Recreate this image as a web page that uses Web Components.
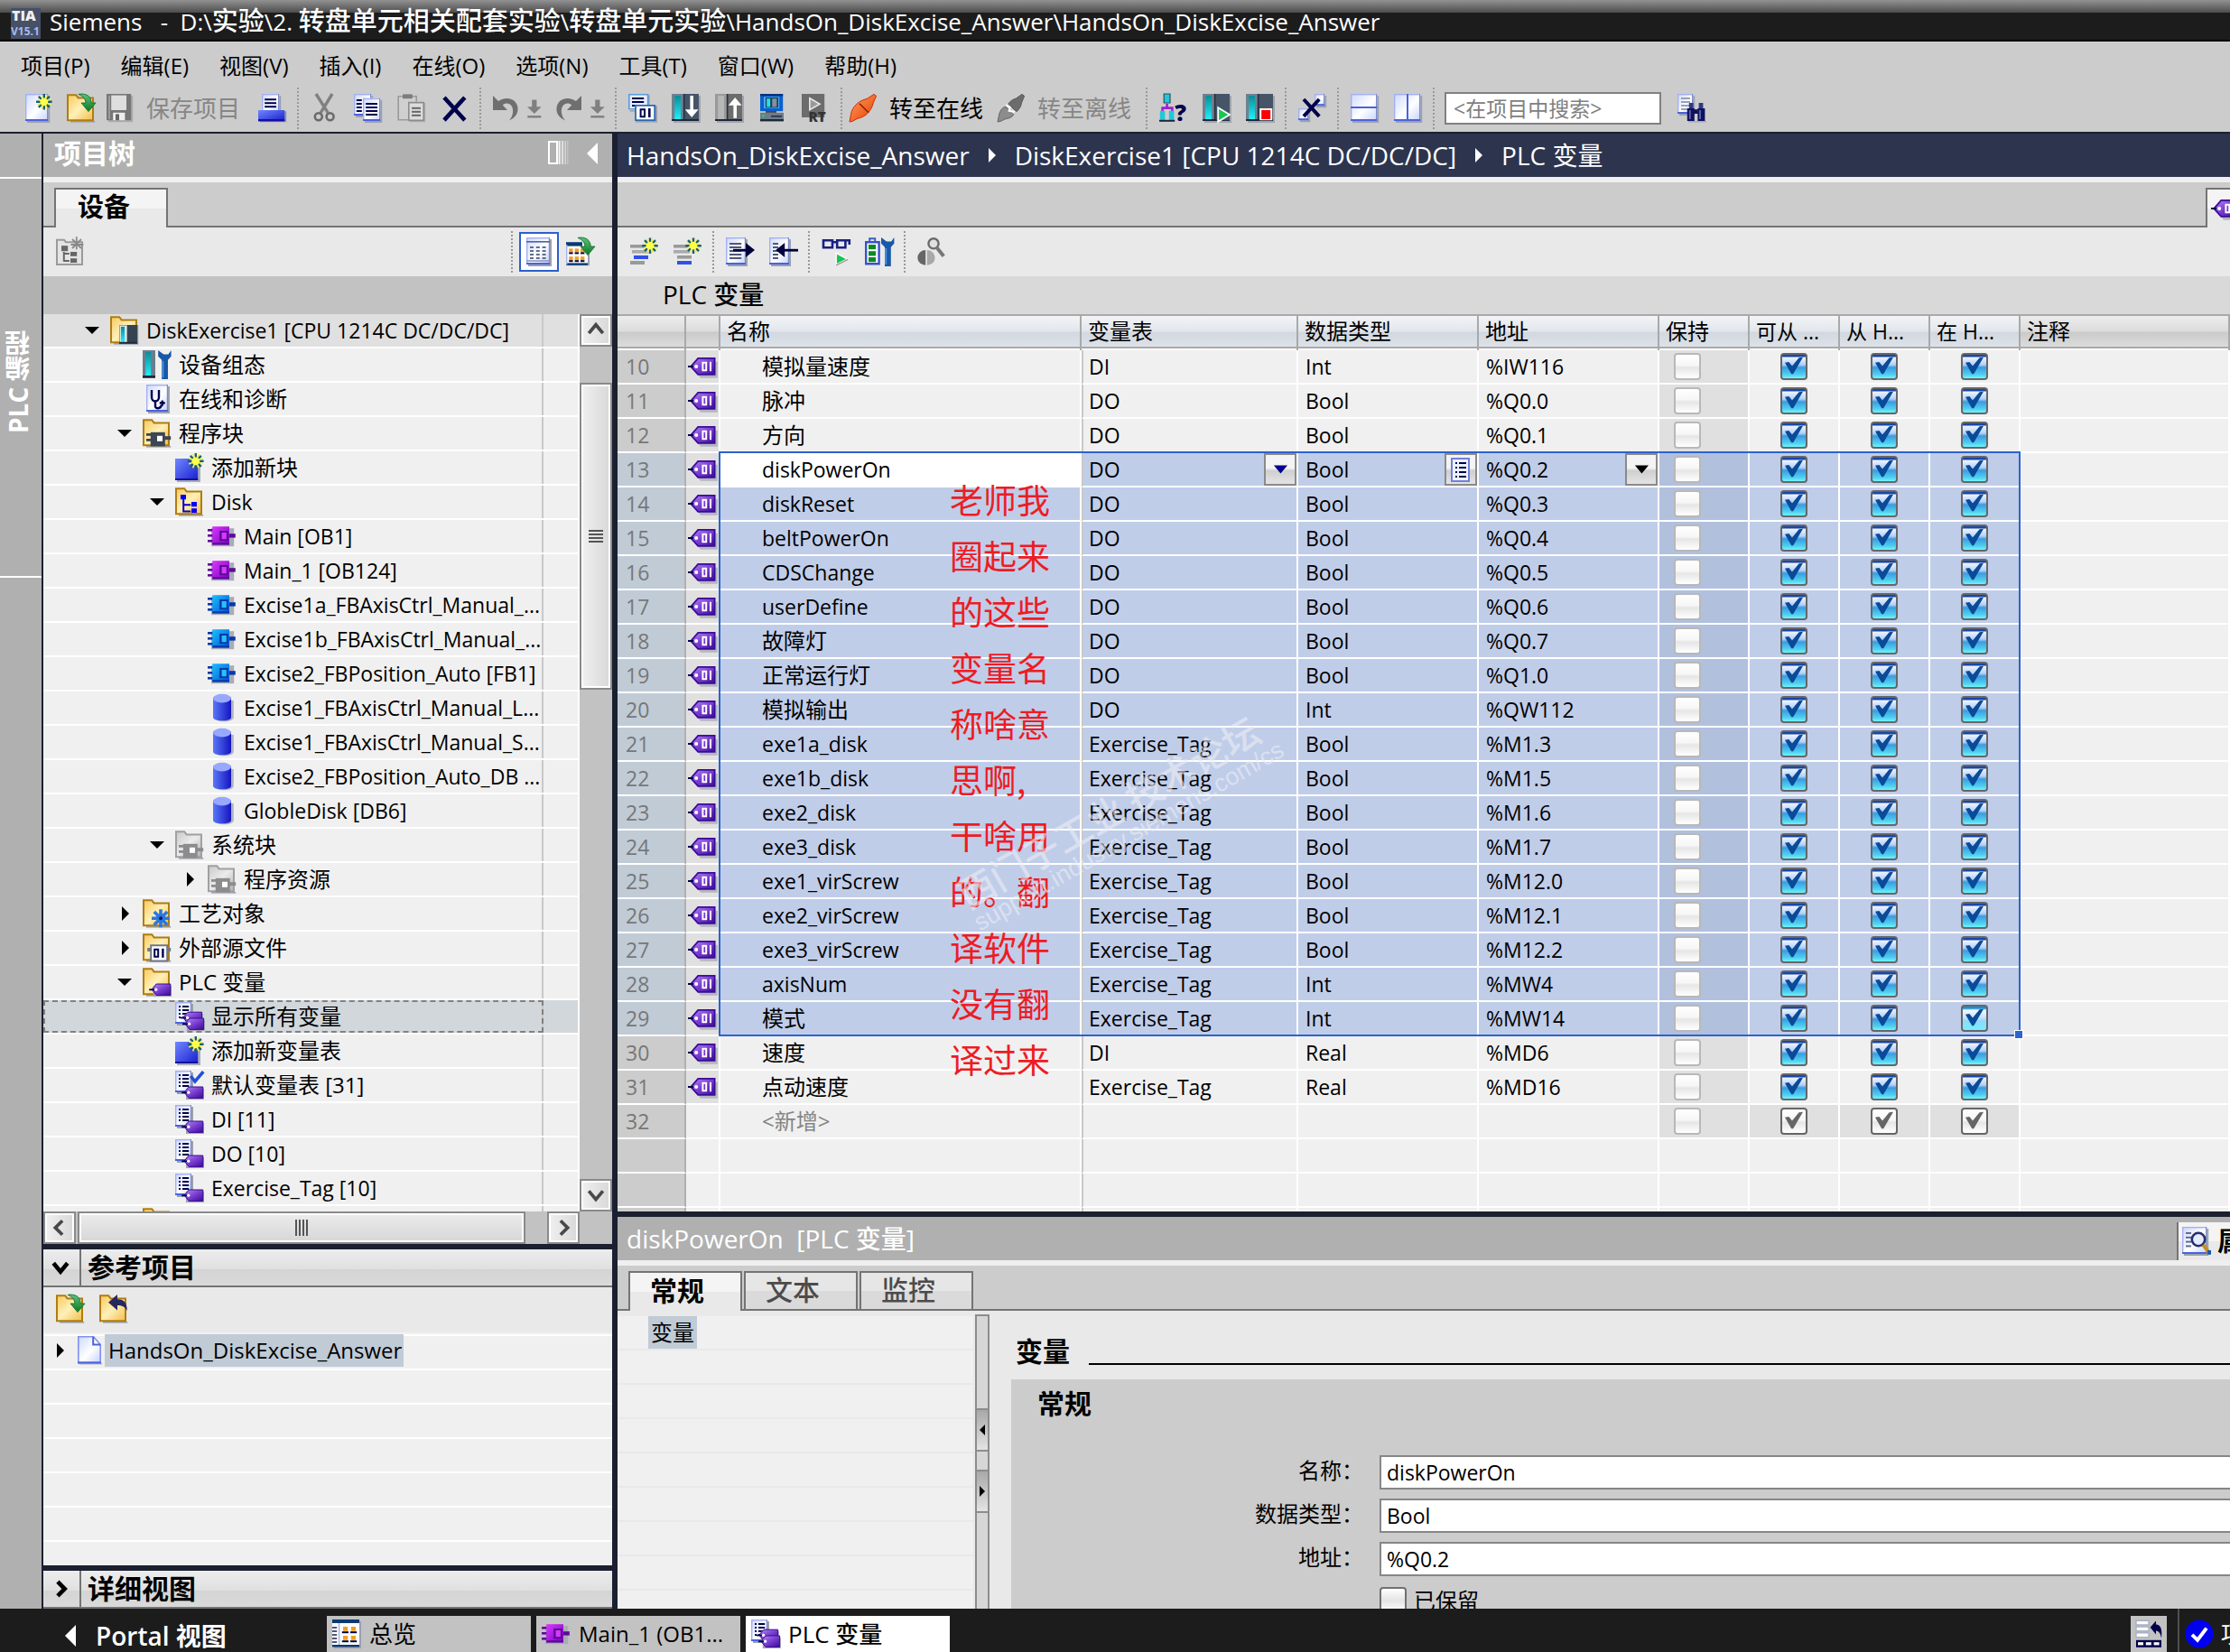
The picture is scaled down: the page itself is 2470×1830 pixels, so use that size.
<!DOCTYPE html>
<html lang="zh-CN">
<head>
<meta charset="utf-8">
<title>Siemens - HandsOn_DiskExcise_Answer</title>
<style>
  html, body { margin: 0; height: 100%; overflow: hidden; }
  body { font-family: "Open Sans", "Noto Sans CJK SC", sans-serif; font-size: 23px; line-height: 34px; color: #000; background: #ccc; }
</style>
</head>
<body>
<tia-app></tia-app>

<script>
/* ---------- shared helpers ---------- */
const BASE = `
  *, *::before, *::after { box-sizing: border-box; }
  button { font: inherit; color: inherit; border: 0; margin: 0; padding: 0; background: none; display: flex; align-items: center; }
  input, select { font: inherit; color: inherit; margin: 0; }
  .zh { font-size: 24px; }
  h1, h2, h3 { margin: 0; font-weight: inherit; font-size: inherit; }
  a { color: inherit; text-decoration: none; }
`;
const isZh = s => /[\u4e00-\u9fff]/.test(s);
const zc = s => isZh(s) ? 'zh' : '';

function define(name, css, html) {
  customElements.define(name, class extends HTMLElement {
    constructor() {
      super();
      const t = document.createElement('template');
      t.innerHTML = `<style>${BASE}${css}</style>` + (typeof html === 'function' ? html(this) : html);
      this.attachShadow({ mode: 'open' }).appendChild(t.content.cloneNode(true));
    }
  });
}

/* ---------- icons, drawn on a 16 unit grid ---------- */
const DEFS = `<defs>
  <linearGradient id="gold" x1="0" y1="0" x2="1" y2="1"><stop offset="0" stop-color="#f7c95c"/><stop offset=".5" stop-color="#fff0b8"/><stop offset="1" stop-color="#f3bd4a"/></linearGradient>
  <linearGradient id="grey" x1="0" y1="0" x2="1" y2="1"><stop offset="0" stop-color="#c8c8c8"/><stop offset=".5" stop-color="#ececec"/><stop offset="1" stop-color="#b0b0b0"/></linearGradient>
  <linearGradient id="doc" x1="0" y1="0" x2="1" y2="1"><stop offset="0" stop-color="#ccd8ff"/><stop offset=".55" stop-color="#fff"/><stop offset="1" stop-color="#c4d2fb"/></linearGradient>
  <linearGradient id="blue" x1="0" y1="0" x2="1" y2="1"><stop offset="0" stop-color="#7088ff"/><stop offset="1" stop-color="#1a1ecf"/></linearGradient>
  <linearGradient id="cyl" x1="0" y1="0" x2="1" y2="0"><stop offset="0" stop-color="#5a78f8"/><stop offset="1" stop-color="#1414c0"/></linearGradient>
  <linearGradient id="pur" x1="0" y1="0" x2="1" y2="1"><stop offset="0" stop-color="#b58cf0"/><stop offset=".5" stop-color="#7a3fd0"/><stop offset="1" stop-color="#3a0a98"/></linearGradient>
  <linearGradient id="mag" x1="0" y1="0" x2="1" y2="1"><stop offset="0" stop-color="#d838ff"/><stop offset="1" stop-color="#7a00b8"/></linearGradient>
  <linearGradient id="sky" x1="0" y1="0" x2="1" y2="1"><stop offset="0" stop-color="#1cc0ff"/><stop offset="1" stop-color="#0050d0"/></linearGradient>
  <linearGradient id="grn" x1="0" y1="0" x2="0" y2="1"><stop offset="0" stop-color="#5cc080"/><stop offset="1" stop-color="#0a7a20"/></linearGradient>
  <linearGradient id="org" x1="0" y1="0" x2="1" y2="1"><stop offset="0" stop-color="#ffa060"/><stop offset="1" stop-color="#e83c00"/></linearGradient>
  <linearGradient id="cyn" x1="0" y1="0" x2="0" y2="1"><stop offset="0" stop-color="#0a8c98"/><stop offset="1" stop-color="#20f0f8"/></linearGradient>
</defs>`;
const R = (x, y, w, h, f, e = '') => `<rect x="${x}" y="${y}" width="${w}" height="${h}" fill="${f}" ${e}/>`;
const P = (d, f = 'none', s = '', w = 1, e = '') => `<path d="${d}" fill="${f}"${s ? ` stroke="${s}" stroke-width="${w}"` : ''} ${e}/>`;
const doc = (x, y, w, h) => R(x + 1, y + 1, w, h, '#9aa0b0') + R(x, y, w, h, 'url(#doc)') + R(x, y, w, .7, '#a4b0f2') + R(x, y, .7, h, '#a4b0f2') + R(x + w - .6, y, .6, h, '#7c8cc8') + R(x, y + h - 1, w, 1, '#4c62dc');
const gdoc = (x, y, w, h) => R(x + .6, y + .6, w, h, '#aaa') + R(x, y, w, h, '#dcdcdc') + P(`M${x + .4} ${y + .4}h${w - .8}v${h - .8}h${.8 - w}z`, 'none', '#8c8c8c', .8);
const lines = (x, y, w, n, c = '#00004c', step = 2) => Array.from({ length: n }, (_, i) => R(x, y + i * step, w, 1, c)).join('');
const star = (x, y) => P(`M${x} ${y - 4.4}v8.8M${x - 4.4} ${y}h8.8M${x - 3} ${y - 3}l6 6M${x + 3} ${y - 3}l-6 6`, 'none', '#1a6070', 1.2) + P(`M${x - 1.6} ${y - 3.8}l3.2 7.6M${x + 1.6} ${y - 3.8}l-3.2 7.6M${x - 3.8} ${y - 1.6}l7.6 3.2M${x - 3.8} ${y + 1.6}l7.6 -3.2`, 'none', '#f4f050', .8) + `<circle cx="${x}" cy="${y}" r="2.2" fill="#ffff48"/>`;
const folder = (f = 'gold', s = '#b07c10') => R(2, 15, 13.6, .8, '#9aa0b0') + P('M.5 14.6V.6h4.6l1.2 1.6h8.2v12.4z', `url(#${f})`, s, 1);
const gArrow = P('M6.5 .2C11 -.6 13.6 1.6 13.6 5H16L12 9.8 8 5h2.4C10.4 2.8 9 1.2 6.5 .2z', 'url(#grn)', '#0a6a20', .4);
const wrench = x => P(`M${x - 3} 0v3.4l2 2V16h3.4V5.400l1.8-2V0l-1.6 2.200h-2.600z`, '#1858a8') + R(x - .9, 6, 1, 9, '#4a90d8');
const plc = (x, c = 'url(#cyn)') => R(x, 0, 7, 15, '#6c7c8c') + R(x + 1.600, 1, 3, 13, c) + R(x, 14, 7, 1.4, '#1c2838');
const cpu = (a = '#70808f', b = '#465468', c = 'url(#cyn)') => R(1, 1, 15, 15, '#a0a4ac') + R(0, 0, 15, 15, a) + R(1.600, 1, 3.400, 13, c) + R(7, 0, 8, 15, b) + R(6.400, 0, .8, 15, '#26303c') + R(0, 14, 15, 1, '#1c2838');
const block = (f, d) => R(2, 3.600, 12.6, 10, '#a8acb8') + R(0, 4, 3, 1.300, d) + R(0, 7, 3, 1.300, d) + R(0, 10, 3, 1.300, d) + R(2.600, 2.600, 9.400, 10, `url(#${f})`) + R(12, 6.600, 3.400, 2.200, d) + R(2.600, 11.600, 9.400, 1.200, d) + R(6.600, 5, 4.800, 5.600, d) + R(7.800, 6, 2.600, 3.600, f === 'mag' ? '#d838ff' : '#28c0ff');
const miniTag = (x, y) => R(x + 1, y + 1, 10, 6, '#a0a4ac') + P(`M${x} ${y + 3}l2.600-3h7.800v6.200h-7.800z`, 'url(#pur)', '#3a0a98', .5) + R(x - 1.400, y + 2.700, 3, .9, '#00004c') + `<circle cx="${x + 2.400}" cy="${y + 3.100}" r=".8" fill="#fff"/>`;
const miniBlock = (d, l) => R(2, 8, 3, 1.400, d) + R(2, 11, 3, 1.400, d) + R(4.400, 7.400, 8, 7, d) + R(12, 9.600, 3.600, 2, d) + R(8, 9.400, 3, 3, l) + R(4.400, 14, 8, 1.200, d);
const table = doc(0, 0, 9, 12) + lines(2, 2, 1, 4) + lines(4, 2, 3.600, 4);
const cross = (x, y, s, w = 2.2) => P(`M${x} ${y}L${x + s} ${y + s * 1.1}M${x + s} ${y}L${x} ${y + s * 1.1}`, 'none', '#00004c', w);
const ICONS = {
  new: doc(0, 0, 12.6, 15) + star(10.4, 4.4),
  open: folder() + gArrow,
  save: R(1, 1, 13.6, 14.6, '#aaa') + R(0, 0, 13.6, 14.6, '#777') + R(2.600, .8, 8.400, 8.200, '#dedede') + R(1, 1, 1, 13, '#9a9a9a') + R(3.600, 10.4, 6.600, 4.200, '#eee') + R(5, 11.2, 2, 3.400, '#666'),
  print: doc(2, 0, 9.600, 11) + lines(3.600, 2.600, 6.400, 3) + R(1, 9.600, 14.6, 6, '#8890b8') + R(0, 9, 14.6, 6, 'url(#blue)') + R(0, 14, 14.6, 1.200, '#1010a0'),
  cut: P('M3 0L9.600 10.4M12 0L5.600 10.4', 'none', '#808080', 1.700) + `<circle cx="4.400" cy="12.6" r="2" fill="none" stroke="#6a6a6a" stroke-width="1.300"/><circle cx="10.800" cy="12.6" r="2" fill="none" stroke="#6a6a6a" stroke-width="1.300"/>`,
  copy: doc(0, 0, 9.600, 12) + lines(1.400, 3, 3, 4) + doc(5, 2.400, 9.600, 12.6) + lines(6.600, 5, 6.400, 4),
  paste: R(.6, 1.400, 10, 13, '#cfcfcf') + P('M.6 1.400h10v13H.6z', 'none', '#9a9a9a', .8) + R(3, .2, 5.400, 2.400, '#7c7c7c') + gdoc(6, 4.400, 9, 10.6) + lines(8, 7.400, 5, 3, '#666'),
  del: cross(2, 2, 11.4, 2.300),
  undo: P('M1 1v8h8L6.400 6.200C9 4 12.600 6 12 10.4c-.2 2-1.200 3.400-2.200 4.400 3.600-1.400 5.400-4.200 4.900-7.400C14 2.600 8.400 1 4 4z', '#6f6f6f'),
  redo: P('M15 1v8H7l2.600-2.800C7 4 3.400 6 4 10.4c.2 2 1.200 3.400 2.200 4.400C2.600 13.4.8 10.600 1.300 7.400 2 2.600 7.600 1 12 4z', '#6f6f6f'),
  dl: R(6.400, 2.600, 3, 5, '#808080') + P('M3.400 7h9L7.900 11.400z', '#808080') + R(3.600, 12.600, 8.600, 1.400, '#808080'),
  compile: R(.8, .8, 11, 9, '#9aa0b0') + R(0, 0, 11, 9, '#e4eefc') + P('M.4.4h10.4v8H.4z', 'none', '#5a9ad8', .8) + lines(2, 2, 6.600, 3) + R(4, 6.600, 12, 9.200, '#9aa0b0') + R(3.600, 6, 11.400, 9, '#fff') + P('M4 6.400h10.600v8.200H4z', 'none', '#2a6ab0', .9) + P('M6.800 8.600h2.200v4H6.800z', 'none', '#00004c', 1) + R(11, 8, 1.300, 5, '#00004c'),
  download: cpu() + R(10.2, 1, 1.800, 8, '#fff') + P('M7.400 8.600h7.400L11.100 13z', '#fff'),
  upload: cpu('#9a9a9a', '#6c6c6c', '#b8b8b8') + R(10.2, 6, 1.800, 7.400, '#fff') + P('M7.400 6.400h7.400L11.100 2z', '#fff'),
  pc: R(1, 0, 12.6, 9.600, '#0a60d0') + R(1, 0, 12.6, 1.200, '#0a3080') + R(3, 1.600, 8.600, 6.400, '#4aa8f0') + R(4, 2, 7, 5.600, '#1c3c50') + R(4.600, 2.600, 2, 4.600, '#20e0f0') + R(7.600, 2.600, 2.600, 4.600, '#8090a0') + R(4, 9.600, 6, .8, '#26303c') + R(1, 10.4, 13, 4.200, '#6c7c8c') + R(1, 14, 13, 1.200, '#1c2838') + R(2, 11.600, 1.400, 1, '#20e040') + R(7, 12, 6, .8, '#26303c'),
  rt: R(0, 0, 12.600, 13, '#6c6c6c') + P('M4.400 2.400l5.600 3.200-5.600 3.200z', '#999', '#e8e8e8', .8) + `<text x="3.800" y="15.6" font-size="7.600" font-weight="800" font-family="Open Sans" fill="#333">RT</text>`,
  online: P('M.5 15.500l.8-4.400C2 7 6 3.500 10 2.800L14 .2l1.300 1L13.600 5c-.8 4-4 7.800-8.600 8.600L2 15.200z', 'url(#org)', '#c83000', .5) + P('M6 5.400l5 5', 'none', '#8c2000', .8),
  offline: P('M.5 15.500l.8-4C2 8.600 3.600 7.400 5 7l4.400 4.600c-1 1.400-2.600 2-4.400 2.200L2 15.200z', '#8c8c8c', '#666', .5) + P('M6.400 5.600C7.400 4 9 3 10.6 2.600L14 .2l1.300 1-1.500 3.600c-.3 2-1.400 4-2.800 5z', '#6c6c6c', '#555', .5) + P('M5 6.200l2.400 1.200-.6 2 3 .6', 'none', '#fff', 1),
  net: R(2.600, 0, 3.400, 5, '#20c8d8') + P('M2.600 0h3.400v5H2.600z', 'none', '#2a5060', .6) + P('M4.300 5.400v2M1.800 10V7.800h5.400V10', 'none', '#a020d0', 1.300) + R(.4, 9.400, 2.800, 5.600, '#20c8d8') + R(5.400, 9.400, 2.800, 5.600, '#20c8d8') + R(0, 14.400, 8.600, 1, '#1c2838') + `<text x="8.600" y="15" font-size="12.600" font-weight="800" font-family="Open Sans" fill="#00004c">?</text>`,
  start: cpu() + R(7.600, 8, 7.400, 6.600, '#465468') + P('M8.600 7.600l6.400 3.900-6.400 3.900z', '#18c850', '#fff', .9),
  stop: cpu() + R(7.600, 8, 7, 6.600, '#fff') + R(8.600, 9, 5, 5, '#f00'),
  xwin: doc(9, 0, 5.600, 6.600) + doc(0, 8, 5.600, 6.600) + cross(3, 3, 8.600, 2),
  splith: doc(0, 0, 14.6, 15) + R(0, 7, 14.6, 1, '#4c62dc'),
  splitv: doc(0, 0, 14.6, 15) + R(7, 0, 1, 15, '#4c62dc'),
  find: doc(0, 0, 8.600, 11) + lines(2, 2, 5, 4, '#98a0b8') + R(6, 15, 10, .8, '#a8acb8') + R(5.400, 8, 4, 7, '#10105c') + R(11.200, 8, 4, 7, '#10105c') + R(6.400, 5, 2.400, 3, '#303880') + R(11.800, 5, 2.400, 3, '#303880') + R(9, 8.600, 2.400, 2.400, '#10105c') + R(6.400, 9, 1, 5, '#5060a8') + R(12, 9, 1, 5, '#5060a8'),
  treenew: P('M.5 15V1.400h4l1 1.200h9v12.400z', '#e4e4e4', '#9a9a9a', 1) + P('M4.400 8v5.400M4.400 9h3M4.400 13h3', 'none', '#666', 1) + R(3, 4.600, 3.600, 3, '#666') + R(8, 8, 3.600, 2.400, '#666') + R(8, 11.600, 3.600, 2.400, '#666') + P('M11.400 -.4v7M8.200 4h7M9 1l5 5M14 1l-5 5', 'none', '#8a8a8a', .9),
  list: doc(1, 0, 13, 15) + R(1, 2, 13, .8, '#4c62a0') + lines(3, 5, 2, 4, '#606c90') + lines(6.400, 5, 2, 4, '#606c90') + lines(9.800, 5, 2, 4, '#606c90') + R(1, 12.6, 13, .8, '#8c98c0'),
  goto: R(1, 3, 12, 12.6, '#9aa0b0') + R(0, 2.600, 12, 12, '#fff') + R(0, 2.600, 9, 2.200, '#0a3a70') + R(0, 14.2, 12, 1.200, '#0a3a70') + [6.2, 10.600].map(y => [1.600, 4.800, 8].map(x => R(x, y, 2.200, 2, '#f0a020') + R(x, y + 2, 2.200, 1, '#00003c')).join('')).join('') + R(0, 4, .7, 11, '#a4b0f2') + gArrow,
  addrow: R(0, 4, 8, 1.800, '#9a9a9a') + R(1, 7, 9, 1.800, '#a8acb0') + R(2, 10, 8, 2, '#3050e8') + R(0, 13, 8, 2, '#9a9a9a') + star(11, 4.600),
  insrow: R(0, 4, 8, 1.800, '#9a9a9a') + R(0, 7, 9, 1.800, '#a8acb0') + R(2, 10, 8, 1.800, '#9a9a9a') + R(2, 13, 8, 2, '#3050e8') + star(11, 4.600),
  export: doc(0, 0, 11, 15) + lines(2, 3, 6.600, 5, '#505878') + R(4, 6.400, 8, 1.400, '#00003c') + P('M11 3l5 4-5 4z', '#00003c'),
  import: doc(0, 0, 11, 15) + lines(2, 3, 3, 5, '#505878') + R(6, 6.400, 10, 1.400, '#00003c') + P('M8.600 3l-5 4 5 4z', '#00003c'),
  monitor: P('M1 1.600h5v4H1zM8.600 1.600h4.600v4H8.600zM6 2.600h2.600M13 1.600h2.400v2.400', 'none', '#1a2080', 1.300) + P('M8 8.600l6.600 3.400L8 15.200z', '#10c850', '#f4f4f4', 1) + P('M8 15.400l6.600-3.200', 'none', '#999', .7),
  config2: P('M2.600 2V.6h3V2', 'none', '#3a60c0', 1) + P('M.6 2.600h7.200v12H.6z', '#fff', '#3a50d0', 1.200) + R(2, 4, 4, 2.600, '#0a8a20') + R(2, 7.600, 4, 2.600, '#0a8a20') + R(2, 11, 4, 2.600, '#0a8a20') + wrench(12),
  probe: `<circle cx="9" cy="3.400" r="2.800" fill="#e0e0e0" stroke="#6a6a6a" stroke-width="1.200"/>` + P('M10.6 5.400l4 5', 'none', '#777', 2) + P('M4.600 7a4.400 4.200 0 000 8.400z', '#666') + P('M5.400 7a4.400 4.200 0 010 8.400z', '#a8a8a8'),
  tag: P('M3 9.400l4-4h9.400v9H7z', '#b4b6c0') + P('M1.600 8l4-4.600h9.200v9H5.600z', 'url(#pur)', '#3a0a98', .9) + R(0, 7.500, 3, 1, '#00004c') + `<circle cx="4.600" cy="8" r="1" fill="#fff"/>` + P('M8.200 5.900h1.900v4.200H8.200z', 'none', '#fff', 1) + R(12, 5.400, 1, 5.200, '#fff'),
  plcfolder: folder() + R(5, 5, 10.6, 10.6, '#8890a0') + R(5.400, 5.400, 4, 9.600, '#d8e4e8') + R(6, 6, 2, 8.400, 'url(#cyn)') + R(9.400, 5, 5.600, 10, '#36424f') + R(5, 14.400, 10, 1, '#1c2838'),
  devcfg: plc(0) + wrench(11.6),
  diag: doc(2, 0, 12, 15) + P('M5 3v4c0 3 4 3 4 0V3M7 9.400v2.600c0 1.600 3 1.600 3.400-.6', 'none', '#00004c', 1.200) + R(9.400, 9.600, 3, 1.200, '#00004c') + R(10.3, 8.800, 1.200, 3, '#00004c'),
  blkfolder: folder() + miniBlock('#3c4654', '#fff'),
  newblue: R(1, 4, 13, 12, '#a8acb8') + R(0, 3, 12.600, 12, 'url(#blue)') + R(0, 14, 12.600, 1, '#1010a0') + star(11.4, 4.400),
  grpfolder: folder() + P('M4.600 6v7.200h4M4.600 9.600h4', 'none', '#00c', 1) + R(3, 4, 3, 2.600, '#00f') + R(9, 8, 3, 2.600, '#00f') + R(9, 11.600, 3, 2.400, '#00f'),
  ob: block('mag', '#5c0a98'),
  fb: block('sky', '#0838a8'),
  db: P('M4 3v10.400c0 3 10.400 3 10.400 0V4z', '#b0b4c4') + P('M3 2.200v11c0 2.600 10 2.600 10 0v-11z', 'url(#cyl)') + `<ellipse cx="8" cy="2.800" rx="5" ry="2.400" fill="#98a8ff"/>`,
  sysfolder: folder('grey', '#a0a0a0') + miniBlock('#8c8c8c', '#fff'),
  techfolder: folder() + P('M10 5.600v10M5 10.600h10M6.400 7l7.200 7.200M13.600 7l-7.200 7.200', 'none', '#2a78e0', 1.800) + `<circle cx="10" cy="10.600" r="2.600" fill="#2a78e0"/><circle cx="10" cy="10.600" r="1" fill="#001c60"/>`,
  extfolder: folder() + R(2.600, 8, 13, 2, '#707888') + R(4.600, 6.600, 9, 8.800, '#fff') + P('M4.600 6.600h9v8.600h-9z', 'none', '#707888', 1) + P('M6.600 8.900h2v4h-2z', 'none', '#00004c', 1) + R(10.600, 8.400, 1.200, 5, '#00004c'),
  tagfolder: folder() + miniTag(5, 9),
  tags: table + miniTag(4.400, 5.600) + miniTag(5.400, 9),
  tagtable: table + miniTag(5, 9),
  tagdef: table + miniTag(5, 9) + P('M8.600 3l2.400 3L15.600 .6', 'none', '#2050d8', 1.800),
  folder: folder(),
  page: R(1, 15, 12.6, .8, '#b8bccc') + P('M.4.400h8.400L12.600 4.800v10H.4z', 'url(#doc)', '#8090f0', .8) + P('M8.600.4v4.400h4', 'none', '#4c62dc', 1) + R(0, 14.2, 13, 1, '#4c62dc'),
  close: folder() + P('M5 4.400L10 0v2.600c3.600 0 5.400 1.800 5.400 6.400-1.400-2.400-2.800-3-5.400-3v2.800z', '#28285c'),
  overview: R(1, 1, 15, 15, '#9aa0b0') + R(0, 0, 15, 15, '#fff') + R(0, 0, 15, 2, '#0a3a70') + R(0, 14, 15, 1.200, '#0a3a70') + lines(0, 4, 2.600, 5, '#505878') + R(3.400, 2, .8, 12, '#a8b8d8') + R(6, 4, 2.600, 2.400, '#f0a020') + R(10.400, 4, 2.600, 2.400, '#f0a020') + R(5.400, 6.600, 3.600, 1, '#00003c') + R(10, 6.600, 3.600, 1, '#00003c') + R(6, 9, 2.600, 2.400, '#f0a020') + R(10.400, 9, 2.600, 2.400, '#f0a020') + R(5.400, 11.600, 3.600, 1, '#00003c') + R(10, 11.600, 3.600, 1, '#00003c'),
  props: doc(0, 0, 13.600, 15) + lines(2, 3, 3, 4, '#606c90', 2.400) + `<circle cx="9" cy="7" r="3.600" fill="#e4ecff" stroke="#26306c" stroke-width="1.300"/>` + P('M11.600 10l3.600 4.600', 'none', '#c89020', 2) + R(14, 13, 2, 2.400, '#1858a8'),
  dock: P('M1 .6h7v2.400H1zM1 4h7v2.400H1zM1 7.400h7v2.400H1z', '#fff', '#a8b0c4', .7) + P('M8.800 4.400L12 .8v2c2.600.2 3.600 2.400 3 7.600-.4-2.600-1.200-4-3-4.200v2z', '#00004c') + R(1, 11.400, 14, 4, '#00004c') + R(2, 12.600, 3, 1.600, '#fff') + R(6.400, 12.600, 3, 1.600, '#fff') + R(10.800, 12.600, 3, 1.600, '#fff'),
  ok: `<circle cx="8" cy="8" r="7.800" fill="#0000f0"/>` + P('M4 8.400l3 3 5-6.600', 'none', '#fff', 2),
  column: P('M.5 1.500h4.500v12H.5z', 'none', '#fff', 1) + R(5.800, 1, 1, 13, '#f4f4f4') + R(7.600, 1, .9, 13, '#e4e4e4') + R(9.200, 1, .8, 13, '#d4d4d4') + R(10.600, 1, .6, 13, '#c8c8c8')
};
customElements.define('tia-icon', class extends HTMLElement {
  constructor() {
    super();
    this.attachShadow({ mode: 'open' }).innerHTML =
      `<style>:host{display:block;flex:none;width:32px;height:32px}svg{display:block;width:100%;height:100%;overflow:visible}</style>
       <svg viewBox="0 0 16 16" aria-hidden="true">${DEFS}${ICONS[this.getAttribute('name')] || ''}</svg>`;
  }
});

/* ---------- toolbar parts ---------- */
customElements.define('tia-tool', class extends HTMLElement {
  constructor() {
    super();
    this.attachShadow({ mode: 'open' }).innerHTML = `<style>${BASE}
      :host { display: block; flex: none; width: 48px; }
      :host([wide]) { width: 164px; } :host([off]) { color: #868686; }
      button { width: 100%; height: 44px; padding-left: 8px; font-size: 26px; gap: 13px; white-space: nowrap; }
      :host([wide]) button { padding-left: 2px; }
    </style><button aria-label="${this.getAttribute('label')}"><tia-icon name="${this.getAttribute('icon')}"></tia-icon><slot></slot></button>`;
  }
});
define('tia-sep', `:host { display: block; flex: none; width: 10px; height: 46px; } i { display: block; width: 2px; height: 100%; margin-left: 3px; background: repeating-linear-gradient(#999 0 2px, transparent 2px 4px); }`, '<i></i>');

/* ---------- title and menus ---------- */
define('tia-titlebar', `
  :host { display: flex; align-items: center; gap: 10px; height: 46px; padding: 3px 12px 0; color: #fff; white-space: pre; font-size: 26px; font-weight: 500;
    border-bottom: 2px solid #000; background: linear-gradient(#929292, #4c4c4c 14px, #1c1c1c 14px); overflow: hidden; }
  .logo { display: flex; flex-direction: column; width: 33px; height: 34px; margin-top: 5px; flex: none; overflow: hidden; background: #465066; font-weight: 700; }
  .logo b { font-size: 16px; line-height: 17px; color: #f0f0f0; padding-left: 1px; } .logo i { font-size: 12px; line-height: 17px; font-style: normal; color: #a8b8f0; }
  .c { font-size: 29px; }
`, `<div class="logo"><b>TIA</b><i>V15.1</i></div>
<h1>Siemens   -  D:\\<span class="c">实验</span>\\2. <span class="c">转盘单元相关配套实验</span>\\<span class="c">转盘单元实验</span>\\HandsOn_DiskExcise_Answer\\HandsOn_DiskExcise_Answer</h1>`);

define('tia-menubar', `:host { display: flex; gap: 34px; height: 50px; padding: 4px 23px 0; font-size: 24px; } button { height: 46px; }`,
  ['项目(P)', '编辑(E)', '视图(V)', '插入(I)', '在线(O)', '选项(N)', '工具(T)', '窗口(W)', '帮助(H)'].map(s => `<button>${s}</button>`).join(''));

define('tia-main-toolbar', `
  :host { display: flex; align-items: center; height: 50px; padding: 0 20px 2px; }
  .n { width: 46px; } .save { width: 166px; padding-left: 6px; gap: 12px; color: #868686; font-size: 26px; }
  .u { width: 70px; padding-left: 6px; gap: 2px; } .u tia-icon + tia-icon { width: 28px; }
  input { width: 240px; height: 36px; margin: 0 10px 0 6px; padding: 0 8px; border: 2px solid #808080; background: #fff; border-radius: 0; font-size: 23px; outline: 0; }
  input::placeholder { color: #808080; opacity: 1; }
`, `<tia-tool class="n" icon="new" label="新建项目"></tia-tool><tia-tool class="n" icon="open" label="打开项目"></tia-tool>
<button class="save"><tia-icon name="save"></tia-icon>保存项目</button><tia-tool icon="print" label="打印"></tia-tool><tia-sep></tia-sep>
<tia-tool icon="cut" label="剪切"></tia-tool><tia-tool icon="copy" label="复制"></tia-tool><tia-tool icon="paste" label="粘贴"></tia-tool><tia-tool icon="del" label="删除"></tia-tool><tia-sep></tia-sep>
<button class="u" aria-label="撤消"><tia-icon name="undo"></tia-icon><tia-icon name="dl"></tia-icon></button><button class="u" aria-label="重做"><tia-icon name="redo"></tia-icon><tia-icon name="dl"></tia-icon></button><tia-sep></tia-sep>
<tia-tool icon="compile" label="编译"></tia-tool><tia-tool icon="download" label="下载"></tia-tool><tia-tool icon="upload" label="上传"></tia-tool><tia-tool icon="pc" label="仿真"></tia-tool><tia-tool icon="rt" label="运行"></tia-tool><tia-sep></tia-sep>
<tia-tool wide icon="online" label="转至在线">转至在线</tia-tool><tia-tool wide off icon="offline" label="转至离线">转至离线</tia-tool><tia-sep></tia-sep>
<tia-tool icon="net" label="可访问的设备"></tia-tool><tia-tool icon="start" label="启动 CPU"></tia-tool><tia-tool icon="stop" label="停止 CPU"></tia-tool><tia-sep></tia-sep>
<tia-tool icon="xwin" label="交叉引用"></tia-tool><tia-sep></tia-sep><tia-tool icon="splith" label="水平拆分"></tia-tool><tia-tool icon="splitv" label="垂直拆分"></tia-tool><tia-sep></tia-sep>
<input type="text" aria-label="在项目中搜索" placeholder="&lt;在项目中搜索&gt;"><tia-tool icon="find" label="搜索"></tia-tool>`);

/* ---------- scrollbars ---------- */
const chev = { up: 'M4 11l5-6 5 6', down: 'M4 6l5 6 5-6', left: 'M11 4L6 9l5 5', right: 'M7 4l5 5-5 5' };
const arrow = d => `<svg viewBox="0 0 18 18" aria-hidden="true"><path d="${chev[d]}" fill="none" stroke="#484848" stroke-width="2.4"/></svg>`;
define('tia-scrollbar', `
  :host { display: flex; background: #c2c2c2; flex: none; }
  :host([dir=v]) { flex-direction: column; width: 36px; } :host([dir=h]) { height: 36px; }
  button, .thumb { border: 2px solid #8a8a8a; box-shadow: inset 0 0 0 2px #fff; background: linear-gradient(90deg, #f0f0f0, #d8d8d8); }
  button { width: 36px; height: 36px; justify-content: center; flex: none; } svg { width: 28px; height: 28px; }
  .thumb { display: flex; align-items: center; justify-content: center; }
  :host([dir=v]) .thumb { height: 340px; margin: 40px 0 auto; } :host([dir=h]) .thumb { flex: 1; margin: 0 24px 0 2px; background: linear-gradient(#ececec, #d6d6d6); }
  i { width: 16px; height: 14px; background: repeating-linear-gradient(#555 0 2px, transparent 2px 4px); }
  :host([dir=h]) i { width: 14px; height: 18px; background: repeating-linear-gradient(90deg, #555 0 2px, transparent 2px 4px); }
`, el => el.getAttribute('dir') === 'v'
  ? `<button aria-label="向上">${arrow('up')}</button><div class="thumb"><i></i></div><button aria-label="向下">${arrow('down')}</button>`
  : `<button aria-label="向左">${arrow('left')}</button><div class="thumb"><i></i></div><button aria-label="向右">${arrow('right')}</button>`);

/* ---------- project tree ---------- */
const TREE = [
  [0, 'v', 'plcfolder', 'DiskExercise1 [CPU 1214C DC/DC/DC]', 'root'], [1, '', 'devcfg', '设备组态'], [1, '', 'diag', '在线和诊断'], [1, 'v', 'blkfolder', '程序块'],
  [2, '', 'newblue', '添加新块'], [2, 'v', 'grpfolder', 'Disk'], [3, '', 'ob', 'Main [OB1]'], [3, '', 'ob', 'Main_1 [OB124]'],
  [3, '', 'fb', 'Excise1a_FBAxisCtrl_Manual_...'], [3, '', 'fb', 'Excise1b_FBAxisCtrl_Manual_...'], [3, '', 'fb', 'Excise2_FBPosition_Auto [FB1]'],
  [3, '', 'db', 'Excise1_FBAxisCtrl_Manual_L...'], [3, '', 'db', 'Excise1_FBAxisCtrl_Manual_S...'], [3, '', 'db', 'Excise2_FBPosition_Auto_DB ...'], [3, '', 'db', 'GlobleDisk [DB6]'],
  [2, 'v', 'sysfolder', '系统块'], [3, '>', 'sysfolder', '程序资源'], [1, '>', 'techfolder', '工艺对象'], [1, '>', 'extfolder', '外部源文件'], [1, 'v', 'tagfolder', 'PLC 变量'],
  [2, '', 'tags', '显示所有变量', 'sel'], [2, '', 'newblue', '添加新变量表'], [2, '', 'tagdef', '默认变量表 [31]'], [2, '', 'tagtable', 'DI [11]'], [2, '', 'tagtable', 'DO [10]'],
  [2, '', 'tagtable', 'Exercise_Tag [10]'], [1, '', 'folder', '']
];
const tri = k => k ? `<svg class="t" viewBox="0 0 24 24" aria-hidden="true"><path d="${k === 'v' ? 'M4 8h16l-8 8z' : 'M9 4l8 8-8 8z'}"/></svg>` : '<span class="t"></span>';
define('tia-tree', `
  :host { display: grid; grid-template: minmax(0, 1fr) 36px / minmax(0, 1fr) 36px; min-height: 0; background: #c2c2c2; }
  ul { margin: 0; padding: 0; list-style: none; overflow: hidden; border-right: 2px solid #fff; background: #f0f0f0; }
  li { display: flex; height: 38px; border-bottom: 2px solid #fff; white-space: nowrap; }
  li::after { content: ""; width: 38px; flex: none; }
  .cell { flex: 1; min-width: 0; display: flex; align-items: center; gap: 8px; border-right: 2px solid #c8c8c8; }
  .t { width: 24px; height: 24px; flex: none; }
  .root { background: #e0e0e0; font-weight: 500; } .sel { background: #d2d7db; } .sel .cell { outline: 2px dashed #808080; outline-offset: -2px; }
  tia-scrollbar[dir=h] { grid-row: 2; }
`, `<ul>${TREE.map(([l, k, i, s, c = '']) => `<li class="${c}"><div class="cell ${zc(s)}" style="padding-left:${42 + 36 * l}px">${tri(k)}<tia-icon name="${i}"></tia-icon><span>${s}</span></div></li>`).join('')}</ul>
<tia-scrollbar dir="v"></tia-scrollbar><tia-scrollbar dir="h"></tia-scrollbar>`);

/* ---------- collapsible section header ---------- */
define('tia-section', `
  :host { display: flex; height: 42px; border-bottom: 2px solid #747474; background: linear-gradient(#ececec, #e0e0e0 22px, #d4d4d4 22px, #dadada); font-size: 30px; font-weight: 700; }
  button { width: 42px; height: 40px; padding-right: 2px; border-right: 2px solid #747474; justify-content: center; } svg { width: 28px; height: 28px; } path { stroke: #000; stroke-width: 3; }
  h2 { padding-left: 7px; line-height: 40px; }
`, el => `<button aria-label="展开或折叠">${arrow(el.getAttribute('dir'))}</button><h2><slot></slot></h2>`);

/* ---------- left pane ---------- */
define('tia-project-pane', `
  :host { display: flex; flex-direction: column; min-height: 0; background: #1a2030; }
  header { display: flex; align-items: center; height: 48px; padding: 0 15px 4px 12px; background: #b0b0b0; color: #fff; }
  header h2 { flex: 1; font-size: 30px; font-weight: 700; } header button + button { margin-left: 10px; }
  .tabs { display: flex; align-items: flex-end; height: 56px; border-top: 6px solid #efefef; padding-left: 12px; background: linear-gradient(#747474, #747474) bottom / 100% 2px no-repeat #ccc; }
  .tabs button { width: 126px; height: 44px; padding: 0 0 4px 24px; border: 2px solid #747474; border-bottom: 0; background: linear-gradient(#f4f4f4 50%, #e9e9e9 50%); font-size: 29px; font-weight: 700; }
  .bar { display: flex; align-items: center; height: 54px; padding: 0 11px 0 6px; background: #e9e9e9; }
  .bar tia-sep { margin-left: auto; margin-right: 2px; }
  .on { width: 44px; height: 44px; border: 2px solid #2c5fd0; background: #fff; justify-content: center; }
  .gap { height: 42px; background: #c2c2c2; } tia-tree { flex: 1; }
  tia-section { margin-top: 6px; }
  .refbar { display: flex; align-items: center; height: 50px; padding: 0 0 2px 6px; background: #e9e9e9; }
  .ref { height: 258px; background: linear-gradient(#f0f0f0 36px, #fff 36px) 0 2px / 100% 38px; border-top: 2px solid #f0f0f0; }
  .ref div { display: flex; align-items: center; height: 36px; padding-left: 6px; font-size: 24px; } .t { width: 24px; height: 24px; flex: none; }
  .ref tia-icon { margin-left: 8px; } .ref span { margin-left: -2px; padding: 0 2px 0 4px; line-height: 36px; background: #c0cbd6; }
`, `<header><h2>项目树</h2><button aria-label="列"><tia-icon name="column"></tia-icon></button><button aria-label="折叠"><svg width="14" height="24" viewBox="0 0 14 24"><path d="M13 0v24L1 12z" fill="#fff"/></svg></button></header>
<div class="tabs"><button>设备</button></div>
<div class="bar"><tia-tool icon="treenew" label="新建"></tia-tool><tia-sep></tia-sep><button class="on" aria-label="列表"><tia-icon name="list"></tia-icon></button><tia-tool icon="goto" label="转到"></tia-tool></div>
<div class="gap"></div><tia-tree></tia-tree>
<tia-section dir="down">参考项目</tia-section>
<div class="refbar"><tia-tool icon="open" label="打开参考项目"></tia-tool><tia-tool icon="close" label="关闭参考项目"></tia-tool></div>
<div class="ref"><div>${tri('>')}<tia-icon name="page"></tia-icon><span>HandsOn_DiskExcise_Answer</span></div></div>
<tia-section dir="right">详细视图</tia-section>`);

/* ---------- PLC tag grid ---------- */
const TAGS = [
  ['模拟量速度', 'DI', 'Int', '%IW116'], ['脉冲', 'DO', 'Bool', '%Q0.0'], ['方向', 'DO', 'Bool', '%Q0.1'], ['diskPowerOn', 'DO', 'Bool', '%Q0.2'],
  ['diskReset', 'DO', 'Bool', '%Q0.3'], ['beltPowerOn', 'DO', 'Bool', '%Q0.4'], ['CDSChange', 'DO', 'Bool', '%Q0.5'], ['userDefine', 'DO', 'Bool', '%Q0.6'],
  ['故障灯', 'DO', 'Bool', '%Q0.7'], ['正常运行灯', 'DO', 'Bool', '%Q1.0'], ['模拟输出', 'DO', 'Int', '%QW112'], ['exe1a_disk', 'Exercise_Tag', 'Bool', '%M1.3'],
  ['exe1b_disk', 'Exercise_Tag', 'Bool', '%M1.5'], ['exe2_disk', 'Exercise_Tag', 'Bool', '%M1.6'], ['exe3_disk', 'Exercise_Tag', 'Bool', '%M1.7'],
  ['exe1_virScrew', 'Exercise_Tag', 'Bool', '%M12.0'], ['exe2_virScrew', 'Exercise_Tag', 'Bool', '%M12.1'], ['exe3_virScrew', 'Exercise_Tag', 'Bool', '%M12.2'],
  ['axisNum', 'Exercise_Tag', 'Int', '%MW4'], ['模式', 'Exercise_Tag', 'Int', '%MW14'], ['速度', 'DI', 'Real', '%MD6'], ['点动速度', 'Exercise_Tag', 'Real', '%MD16'],
  ['&lt;新增&gt;', '', '', ''], null, null, null
];
const CHECK = `
  input[type=checkbox] { appearance: none; display: block; width: 30px; height: 30px; margin: 0 auto; border: 2px solid #666; border-radius: 4px; background: linear-gradient(#1747a8 2px, #eef4ff 3px, #b4d0f8 11px, #3a9ce0 14px, #50d0f0 22px, #70f4ff); }
  input[type=checkbox]:checked::before { content: ""; display: block; width: 20px; height: 20px; margin: 2px 3px; background: #0a4a98; clip-path: polygon(0 34%, 22% 30%, 40% 52%, 78% 6%, 100% 4%, 46% 96%, 36% 96%); }
  input[type=checkbox].off, input[type=checkbox].new { background: linear-gradient(#fff, #f6f6f6 45%, #e6e6e6 55%, #fff); }
  input[type=checkbox].off { border-color: #b8b8b8; margin-left: 16px; } input[type=checkbox].new:checked::before { background: #666; }
  input[type=checkbox].hot { background: linear-gradient(#1590d8 2px, #f4faff 4px, #c8e4fc 12px, #90d8f8 16px, #70f0ff); }
`;
const HEAD = ['', '', '名称', '变量表', '数据类型', '地址', '保持', '可从 ...', '从 H...', '在 H...', '注释'];
const row = (t, i) => {
  const n = i + 10, sel = n > 12 && n < 30, add = n === 32;
  if (!t) return `<tr>${'<td></td>'.repeat(11)}</tr>`;
  const box = (c, k) => add ? `<input type="checkbox" class="new" checked disabled aria-label="${n} ${c}">` : `<input type="checkbox" ${n === 29 && k === 2 ? 'class="hot"' : ''} checked aria-label="${n} ${c}">`;
  const cell = (s, k) => n !== 13 ? s
    : k === 1 ? `<div class="ed">${s}<button aria-label="选择类型"><svg viewBox="0 0 32 32"><path d="M6 4h19v25H6z" fill="#eef2ff" stroke="#7080e0" stroke-width="2"/><path d="M10 9h2M14 9h8M10 14h2M14 14h8M10 19h2M14 19h8M10 24h2M14 24h8" stroke="#00004c" stroke-width="2"/></svg></button></div>`
    : `<select aria-label="${k ? '地址' : '变量表'}"><option>${s}</option></select><svg class="dd" viewBox="0 0 36 36"><path d="M10 13h17l-8.500 10z" fill="${k ? '#000' : '#00008c'}"/></svg>`;
  return `<tr class="${sel ? 'sel' : ''} ${n === 13 ? 'cur' : ''} ${add ? 'add' : ''}"><td>${n}</td><td>${add ? '' : '<tia-icon name="tag"></tia-icon>'}</td><td class="${zc(t[0])}">${t[0]}</td>
    <td>${cell(t[1], 0)}</td><td>${cell(t[2], 1)}</td><td>${cell(t[3], 2)}</td><td><input type="checkbox" class="off" disabled aria-label="${n} 保持"></td>
    <td>${box('可访问', 0)}</td><td>${box('可写', 1)}</td><td>${box('可见', 2)}</td><td></td></tr>`;
};
define('tia-tag-grid', `
  :host { display: block; position: relative; overflow: hidden; background: #f0f0f0; min-height: 0; }
  table { table-layout: fixed; width: 100%; border-collapse: separate; border-spacing: 0; white-space: nowrap; }
  th, td { padding: 0; text-align: left; font-weight: 400; overflow: hidden; }
  th { height: 40px; border: 2px solid #a9a9a9; border-left: 0; border-bottom: 0; padding: 0 0 4px 7px; font-size: 24px; line-height: 32px;
    background: linear-gradient(#fff, #fff) bottom / 100% 2px no-repeat, linear-gradient(#a9a9a9, #a9a9a9) 0 34px / 100% 2px no-repeat, linear-gradient(#f2f4f6, #e2e6ec 17px, #d2d8e0 18px, #dde2e8 34px); }
  th:nth-child(-n+2), th:last-child { background: linear-gradient(#fff, #fff) bottom / 100% 2px no-repeat, linear-gradient(#a9a9a9, #a9a9a9) 0 34px / 100% 2px no-repeat, linear-gradient(#ececec, #dcdcdc 17px, #cacaca 18px, #dcdcdc 34px); }
  th.h { font-size: 23px; }
  td { height: 38px; border-right: 2px solid #fff; border-bottom: 2px solid #fff; padding-left: 8px; }
  td:nth-child(1) { background: #ccc; border-right-color: #b0b0b0; color: #777; padding-left: 9px; }
  td:nth-child(2) { padding-left: 2px; background: #e0e0e0; } .add td:nth-child(2), tr:not([class]) td:nth-child(2) { background: #f0f0f0; }
  td:nth-child(3) { padding-left: 46px; } .add td:nth-child(3) { color: #848484; }
  td:nth-child(4) { border-left: 2px solid #c8c8c8; padding-left: 6px; }
  td:nth-child(n+7) { padding: 0; } tr[class] td:nth-child(7), .add td:nth-child(8), .add td:nth-child(9), .add td:nth-child(10) { background: #e0e0e0; }
  tr.sel td:nth-child(n+3):nth-child(-n+10) { background: #c0cde9; } tr.sel td:first-child { background: #c0cbd6; } tr.sel td:nth-child(7) { background: #b1c0dd !important; }
  tr.cur td:nth-child(3) { background: #fff !important; }
  tr.cur td { position: relative; }
  select { appearance: none; display: block; width: 100%; height: 36px; border: 0; padding: 0; background: none; outline: 0; }
  .dd, .ed button { width: 36px; height: 36px; border: 2px solid #8a8a8a; background: linear-gradient(#f4f4f4 45%, #cfcfcf 55%, #e4e4e4); }
  .dd { position: absolute; right: 0; top: 0; pointer-events: none; } .ed { display: flex; justify-content: space-between; align-items: center; }
  .range { position: absolute; left: 112px; top: 152px; width: 1442px; height: 648px; border: 2px solid #2c62d0; pointer-events: none; }
  .range::after { content: ""; position: absolute; right: -5px; bottom: -5px; width: 10px; height: 10px; background: #2c62d0; border: 1px solid #fff; }
  .note { position: absolute; left: 368px; top: 174px; margin: 0; width: 120px; font-family: "Noto Sans CJK SC", sans-serif; font-size: 37px; line-height: 62px; color: #ed1c24; white-space: nowrap; }
  .mark { position: absolute; left: 404px; top: 616px; transform: rotate(-30deg); transform-origin: 0 100%; color: rgba(236,238,244,.6); font-weight: 500; white-space: nowrap; pointer-events: none; }
  .mark b { display: block; font: 500 41px/44px "Noto Sans CJK SC", sans-serif; } .mark span { display: block; font: 27px/28px "Liberation Sans", sans-serif; }
  ${CHECK}
`, `<table><colgroup>${[76, 38, 400, 240, 200, 200, 100, 100, 100, 100].map(w => `<col style="width:${w}px">`).join('')}<col></colgroup>
<thead><tr>${HEAD.map(h => `<th class="${h.includes('.') ? 'h' : ''}">${h}</th>`).join('')}</tr></thead><tbody>${TAGS.map(row).join('')}</tbody></table>
<div class="range"></div>
<p class="note">老师我<br>圈起来<br>的这些<br>变量名<br>称啥意<br>思啊,<br>干啥用<br>的。翻<br>译软件<br>没有翻<br>译过来</p>
<div class="mark"><b>西门子工业 技术论坛</b><span>support.industry.siemens.com/cs</span></div>`);

/* ---------- editor ---------- */
define('tia-editor', `
  :host { display: flex; flex-direction: column; min-height: 0; }
  nav { display: flex; align-items: center; gap: 21px; height: 48px; padding: 0 10px; background: #2d344e; color: #fff; font-size: 28px; white-space: nowrap; }
  .tabs { display: flex; justify-content: flex-end; align-items: flex-end; height: 56px; border-top: 6px solid #efefef; background: linear-gradient(#747474, #747474) bottom / 100% 2px no-repeat #ccc; }
  .tabs button { width: 27px; height: 44px; padding-left: 4px; border: 2px solid #747474; border-width: 2px 0 0 2px; background: linear-gradient(#f4f4f4 50%, #e9e9e9 50%); overflow: hidden; }
  .bar { display: flex; align-items: center; height: 54px; padding-left: 6px; background: #e9e9e9; }
  h2 { height: 42px; padding-left: 50px; background: #d9d9d9; font-size: 28px; line-height: 40px; font-weight: 500; }
  tia-tag-grid { flex: 1; }
`, `<nav><a href="#">HandsOn_DiskExcise_Answer</a><svg width="8" height="16" viewBox="0 0 8 16"><path d="M0 0l8 8-8 8z" fill="#fff"/></svg><a href="#">DiskExercise1 [CPU 1214C DC/DC/DC]</a><svg width="8" height="16" viewBox="0 0 8 16"><path d="M0 0l8 8-8 8z" fill="#fff"/></svg><a href="#">PLC 变量</a></nav>
<div class="tabs"><button aria-label="变量"><tia-icon name="tag"></tia-icon></button></div>
<div class="bar"><tia-tool icon="addrow" label="添加行"></tia-tool><tia-tool icon="insrow" label="插入行"></tia-tool><tia-sep></tia-sep><tia-tool icon="export" label="导出"></tia-tool><tia-tool icon="import" label="导入"></tia-tool><tia-sep></tia-sep>
<tia-tool icon="monitor" label="全部监视"></tia-tool><tia-tool icon="config2" label="保持性"></tia-tool><tia-sep></tia-sep><tia-tool icon="probe" label="检查"></tia-tool></div>
<h2>PLC 变量</h2><tia-tag-grid></tia-tag-grid>`);

/* ---------- inspector ---------- */
define('tia-inspector', `
  :host { display: flex; flex-direction: column; height: 440px; border-top: 6px solid #1a2030; background: #e9e9e9; overflow: hidden; }
  header { display: flex; height: 48px; background: #b0b0b0; color: #fff; flex: none; }
  header h2 { flex: 1; padding-left: 10px; font-size: 28px; line-height: 48px; font-weight: 500; white-space: pre; }
  header button { align-self: flex-end; width: 59px; height: 42px; border-left: 2px solid #747474; padding-left: 4px; gap: 7px; background: linear-gradient(#f4f4f4 50%, #e9e9e9 50%); color: #000; font-size: 29px; font-weight: 700; overflow: hidden; white-space: nowrap; }
  .tabs { display: flex; align-items: flex-end; gap: 2px; height: 56px; flex: none; padding-left: 12px; border-top: 6px solid #efefef; background: linear-gradient(#747474, #747474) bottom / 100% 2px no-repeat #ccc; }
  .tabs button { width: 126px; height: 44px; padding: 0 0 2px 22px; border: 2px solid #747474; background: linear-gradient(#e6e6e6 50%, #dadada 50%); font-size: 30px; font-weight: 500; color: #4c4c4c; }
  .tabs .on { border-bottom: 0; background: linear-gradient(#f4f4f4 50%, #e9e9e9 50%); color: #000; font-weight: 700; }
  .body { flex: 1; display: flex; min-height: 0; }
  .list { width: 394px; margin-top: 4px; padding: 2px 0 0 34px; background: linear-gradient(#f0f0f0 36px, #e9e9e9 36px) 0 2px / 100% 38px; }
  .list span { display: inline-block; line-height: 36px; padding: 0 3px; background: #c0cbd6; font-size: 24px; }
  .split { width: 16px; margin: 4px 0 0 2px; border: 2px solid #8c8c8c; border-bottom: 0; background: #d6d6d6; padding-top: 102px; }
  .split button { width: 100%; height: 48px; margin-bottom: 20px; border: 2px solid #8c8c8c; border-width: 2px 0; background: linear-gradient(#a8a8a8, #e4e4e4); justify-content: center; }
  .page { flex: 1; min-width: 0; padding: 28px 0 0 24px; display: flex; flex-direction: column; }
  .cap { display: flex; align-items: center; gap: 21px; height: 40px; padding-left: 5px; font-size: 30px; font-weight: 700; margin-bottom: 14px; }
  .cap::after { content: ""; flex: 1; height: 2px; background: #000; margin-top: 28px; }
  .card { flex: 1; background: #ccc; padding-top: 6px; }
  .card h3 { padding-left: 29px; font-size: 30px; line-height: 42px; font-weight: 700; margin-bottom: 36px; }
  .f { display: grid; grid-template-columns: 390px 1fr; column-gap: 18px; height: 36px; margin-bottom: 12px; }
  .f label { text-align: right; font-size: 24px; line-height: 34px; } .f input { border: 2px solid #868686; border-right: 0; background: #fff; padding: 0 6px; outline: 0; width: 100%; border-radius: 0; }
  .k { display: flex; gap: 8px; padding-left: 408px; align-items: center; font-size: 24px; }
  ${CHECK}
  .k input[type=checkbox] { margin: 0; border-color: #707070; background: linear-gradient(#fff, #e4e4e4 50%, #fff); }
`, `<header><h2>diskPowerOn  [PLC 变量]</h2><button><tia-icon name="props"></tia-icon>属性</button></header>
<div class="tabs"><button class="on">常规</button><button>文本</button><button>监控</button></div>
<div class="body"><div class="list"><span>变量</span></div>
<div class="split"><button aria-label="收起"><svg width="6" height="12" viewBox="0 0 6 12"><path d="M6 0v12L0 6z"/></svg></button><button aria-label="展开"><svg width="6" height="12" viewBox="0 0 6 12"><path d="M0 0l6 6-6 6z"/></svg></button></div>
<div class="page"><h2 class="cap">变量</h2><div class="card"><h3>常规</h3>
<div class="f"><label for="n">名称：</label><input id="n" type="text" value="diskPowerOn"></div>
<div class="f"><label for="d">数据类型：</label><input id="d" type="text" value="Bool"></div>
<div class="f"><label for="a">地址：</label><input id="a" type="text" value="%Q0.2"></div>
<div class="k"><input id="r" type="checkbox"><label for="r">已保留</label></div></div></div></div>`);

/* ---------- bottom bar ---------- */
define('tia-taskbar', `
  :host { display: flex; align-items: flex-end; gap: 6px; height: 48px; background: #1c1c1c; overflow: hidden; }
  .portal { width: 356px; height: 48px; padding: 12px 0 0 70px; gap: 22px; color: #fff; font-size: 28px; font-weight: 600; }
  .task { width: 226px; height: 40px; padding-left: 6px; gap: 9px; background: #c2c2c2; font-size: 24px; white-space: nowrap; }
  .task.z { font-size: 26px; } .task.on { background: #fff; font-weight: 500; }
  .dock { width: 40px; height: 40px; margin-left: auto; background: #c2c2c2; justify-content: center; }
  .st { display: flex; align-items: center; gap: 8px; width: 58px; height: 48px; margin-left: 6px; padding: 8px 0 0 6px; border-left: 2px solid #505050; color: #fff; font-size: 26px; white-space: nowrap; overflow: hidden; }
`, `<button class="portal"><svg width="14" height="24" viewBox="0 0 14 24"><path d="M14 0v24L2 12z" fill="#fff"/></svg>Portal 视图</button>
<button class="task z"><tia-icon name="overview"></tia-icon>总览</button><button class="task"><tia-icon name="ob"></tia-icon>Main_1 (OB1...</button><button class="task z on"><tia-icon name="tags"></tia-icon>PLC 变量</button>
<button class="dock" aria-label="停靠"><tia-icon name="dock"></tia-icon></button><div class="st"><tia-icon name="ok"></tia-icon>项</div>`);

/* ---------- application frame ---------- */
define('tia-app', `
  :host { display: flex; flex-direction: column; height: 100vh; }
  main { flex: 1; min-height: 0; display: grid; grid-template-columns: 46px 632px minmax(0, 1fr); border-top: 2px solid #1a2030; }
  aside { background: linear-gradient(#fff, #fff) 0 48px / 100% 2px no-repeat, linear-gradient(#fff, #fff) 0 490px / 100% 2px no-repeat, #b0b0b0; color: #fff; }
  aside span { display: block; writing-mode: vertical-rl; transform: rotate(180deg); height: 282px; width: 40px; line-height: 40px; margin-top: 50px; font-size: 28px; font-weight: 700; }
  .left { background: #1a2030; display: grid; min-height: 0; } tia-project-pane { margin-left: 2px; }
  .right { display: flex; flex-direction: column; min-height: 0; border-left: 6px solid #1a2030; } tia-editor { flex: 1; }
`, `<tia-titlebar></tia-titlebar><tia-menubar></tia-menubar><tia-main-toolbar></tia-main-toolbar>
<main><aside><span>PLC 编程</span></aside><div class="left"><tia-project-pane></tia-project-pane></div><div class="right"><tia-editor></tia-editor><tia-inspector></tia-inspector></div></main>
<tia-taskbar></tia-taskbar>`);
</script>
</body>
</html>
